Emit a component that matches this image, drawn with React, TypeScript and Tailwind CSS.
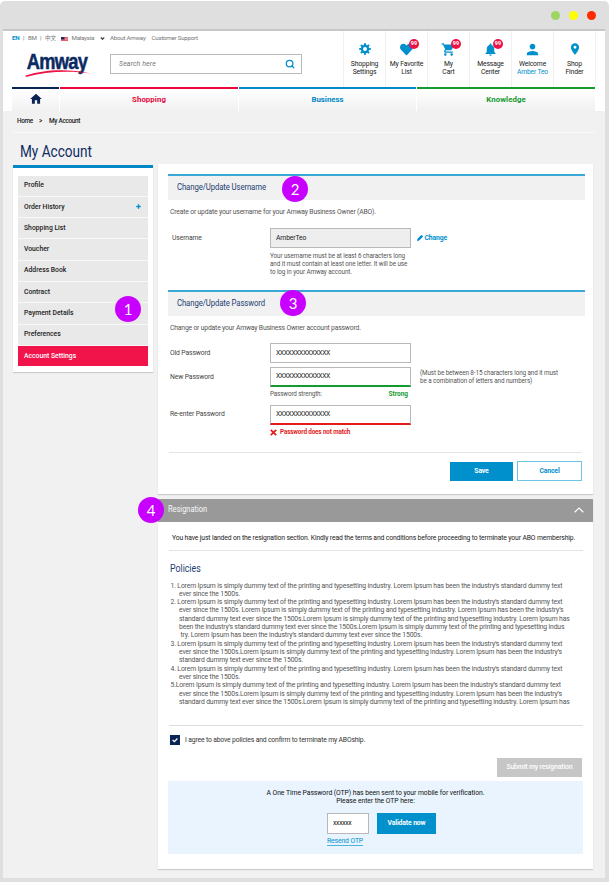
import type { ReactNode } from 'react';
import { FaHeart } from 'react-icons/fa';
import { MdHome, MdLocationOn, MdNotifications, MdPerson, MdShoppingCart } from 'react-icons/md';
import { FiSearch } from 'react-icons/fi';

const menu = [
  'Profile',
  'Order History',
  'Shopping List',
  'Voucher',
  'Address Book',
  'Contract',
  'Payment Details',
  'Preferences',
];

const policies = [
  { indent: false, text: '1. Lorem Ipsum is simply dummy text of the printing and typesetting industry. Lorem Ipsum has been the industry’s standard dummy text' },
  { indent: true, text: 'ever since the 1500s.' },
  { indent: false, text: '2. Lorem Ipsum is simply dummy text of the printing and typesetting industry. Lorem Ipsum has been the industry’s standard dummy text' },
  { indent: true, text: 'ever since the 1500s. Lorem Ipsum is simply dummy text of the printing and typesetting industry. Lorem Ipsum has been the industry’s' },
  { indent: true, text: 'standard dummy text ever since the 1500s.Lorem Ipsum is simply dummy text of the printing and typesetting industry. Lorem Ipsum has' },
  { indent: true, text: 'been the industry’s standard dummy text ever since the 1500s.Lorem Ipsum is simply dummy text of the printing and typesetting indus' },
  { indent: true, text: ' try. Lorem Ipsum has been the industry’s standard dummy text ever since the 1500s.' },
  { indent: false, text: '3. Lorem Ipsum is simply dummy text of the printing and typesetting industry. Lorem Ipsum has been the industry’s standard dummy text' },
  { indent: true, text: 'ever since the 1500s.Lorem Ipsum is simply dummy text of the printing and typesetting industry. Lorem Ipsum has been the industry’s' },
  { indent: true, text: 'standard dummy text ever since the 1500s.' },
  { indent: false, text: '4. Lorem Ipsum is simply dummy text of the printing and typesetting industry. Lorem Ipsum has been the industry’s standard dummy text' },
  { indent: true, text: 'ever since the 1500s.' },
  { indent: false, text: '5.Lorem Ipsum is simply dummy text of the printing and typesetting industry. Lorem Ipsum has been the industry’s standard dummy text' },
  { indent: true, text: 'ever since the 1500s.Lorem Ipsum is simply dummy text of the printing and typesetting industry. Lorem Ipsum has been the industry’s' },
  { indent: true, text: 'standard dummy text ever since the 1500s.Lorem Ipsum is simply dummy text of the printing and typesetting industry. Lorem Ipsum has' },
];

function Marker({ n, className }: { n: number; className: string }) {
  return (
    <span
      className={`absolute flex size-[26px] items-center justify-center rounded-full bg-[#c800ff] font-['Lato',sans-serif] text-[15px] leading-none text-white ${className}`}
    >
      {n}
    </span>
  );
}

function Badge() {
  return (
    <span className="absolute -top-[3px] left-[9.5px] flex size-[10px] items-center justify-center rounded-full bg-[#ee1144] text-[5.5px] font-bold leading-none text-white">
      99
    </span>
  );
}

function Tool({ icon, badge, top, bottom, accent }: { icon: ReactNode; badge?: boolean; top: string; bottom: string; accent?: boolean }) {
  return (
    <div className="flex h-[56px] w-[42px] flex-col items-center border-l border-[#f0f0f0] pt-[11px]">
      <span className="relative flex h-[14px] w-[14px] items-center justify-center text-[#0090cc]">
        {icon}
        {badge && <Badge />}
      </span>
      <span className="mt-[3.5px] whitespace-nowrap text-center text-[6.8px] leading-[8.3px] tracking-[-0.14px] text-[#222]">
        {top}
        <br />
        <span className={accent ? 'tracking-[-0.2px] text-[#0090cc]' : ''}>{bottom}</span>
      </span>
    </div>
  );
}

function SectionTitle({ children }: { children: string }) {
  return (
    <h2 className="h-[26px] border-t-2 border-[#3aa9d6] bg-[#f1f1f1] pl-[9px] text-[9.3px] leading-[21px] text-[#1c3f72]">
      <span className="inline-block origin-left scale-x-[.835]">{children}</span>
    </h2>
  );
}

function Field({ value, className }: { value: string; className: string }) {
  return (
    <div className={`flex h-[20px] w-[141px] items-center border border-[#b8b8b8] pl-[5px] text-[6.8px] text-[#222] ${className}`}>
      {value}
    </div>
  );
}

function Header() {
  return (
    <header className="h-[80px] bg-white pl-[9px] pr-[10px]">
      <div className="flex h-[56px]">
        <div className="flex-1">
          <div className="flex h-[15px] items-center whitespace-nowrap text-[6.2px] tracking-[-0.25px] text-[#777]">
            <span className="w-[11px] font-bold text-[#0090cc]">EN</span>
            <span className="w-[5px]">|</span>
            <span className="w-[12px]">BM</span>
            <span className="w-[5px]">|</span>
            <span className="w-[16px] font-['Noto_Sans_CJK_SC',sans-serif] text-[5.5px] tracking-normal">中文</span>
            <svg className="mr-[3.5px] h-[4px] w-[7px]" viewBox="0 0 14 8">
              <path fill="#f3a0a8" d="M0 0h14v8H0z" />
              <path stroke="#dd3344" strokeWidth="1.2" d="M0 1h14M0 4h14M0 7h14" />
              <path fill="#222855" d="M0 0h7v5H0z" />
            </svg>
            <span className="w-[28px]">Malaysia</span>
            <svg className="mr-[5.5px] h-[3px] w-[5px]" viewBox="0 0 10 6" fill="none" stroke="#444" strokeWidth="2.4">
              <path d="M1.5 1L5 4.5 8.5 1" />
            </svg>
            <span className="w-[41.5px]">About Amway</span>
            <span>Customer Support</span>
          </div>
          <div className="flex">
            <div className="relative ml-[13px] mt-[5px] h-[26px] w-[85px]">
              <span className="block origin-left scale-x-[.85] pl-[2px] font-['Liberation_Sans',sans-serif] text-[21.5px] font-bold leading-[23px] tracking-[-0.8px] text-[#0b2a63] [-webkit-text-stroke:.5px_#0b2a63]">
                Amway
              </span>
              <svg className="absolute left-0 top-[18px] h-[8px] w-[66px]" viewBox="0 0 66 8">
                <path fill="#ee1144" d="M.5 6.6C18 .6 43-.8 65.5 4.6 44 1.2 20 2.8.8 8Z" />
              </svg>
            </div>
            <div className="mt-[8px] flex h-[20px] w-[192px] items-center justify-between border border-[#bbb] pl-[8px] pr-[6px] text-[7px] italic tracking-[.1px] text-[#777]">
              Search here
              <FiSearch className="size-[10px] stroke-[3] text-[#0090cc]" />
            </div>
          </div>
        </div>
        <div className="-mr-px flex border-r border-[#f0f0f0]">
          <Tool
            icon={
              <svg className="size-[12px]" viewBox="0 0 24 24" fill="none" stroke="currentColor">
                <circle cx="12" cy="12" r="6.2" strokeWidth="4.4" />
                <path strokeWidth="4.2" d="M12 .5v4M12 19.5v4M.5 12h4M19.5 12h4M3.9 3.9l2.8 2.8M17.3 17.3l2.8 2.8M20.1 3.9l-2.8 2.8M6.7 17.3l-2.8 2.8" />
              </svg>
            }
            top="Shopping"
            bottom="Settings"
          />
          <Tool icon={<FaHeart className="size-[13px]" />} badge top="My Favorite" bottom="List" />
          <Tool icon={<MdShoppingCart className="size-[15px] shrink-0" />} badge top="My" bottom="Cart" />
          <Tool icon={<MdNotifications className="size-[15px] shrink-0" />} badge top="Message" bottom="Center" />
          <Tool icon={<MdPerson className="size-[17px] shrink-0" />} top="Welcome" bottom="Amber Teo" accent />
          <Tool icon={<MdLocationOn className="size-[14px]" />} top="Shop" bottom="Finder" />
        </div>
      </div>
      <nav className="flex h-[24px] gap-px text-center text-[7.8px] font-bold leading-[21px]">
        <a className="flex w-[47px] justify-center border-t-2 border-[#0b2456] bg-linear-to-b from-white to-[#f1f1f1] pt-[3px]">
          <MdHome className="size-[14px] text-[#0b2456]" />
        </a>
        <a className="w-[178px] border-t-2 border-[#e8073c] bg-linear-to-b from-white to-[#f1f1f1] tracking-[.08px] text-[#e8073c]">Shopping</a>
        <a className="w-[177px] border-t-2 border-[#0088c7] bg-linear-to-b from-white to-[#f1f1f1] text-[#0088c7]">Business</a>
        <a className="flex-1 border-t-2 border-[#159a2f] bg-linear-to-b from-white to-[#f1f1f1] tracking-[.08px] text-[#159a2f]">Knowledge</a>
      </nav>
    </header>
  );
}

function Sidebar() {
  return (
    <aside className="w-[140px]">
      <h1 className="h-[31px] pl-[7px] text-[17px] leading-[37px] text-[#0f2d63]">
        <span className="inline-block origin-left scale-x-[.8]">My Account</span>
      </h1>
      <div className="mt-px h-[207px] border-t-[3px] border-[#0088c7] bg-white px-[5px] pt-[7.5px] text-[6.8px] font-medium text-[#222] shadow-[0_1px_1px_#ccc]">
        {menu.map((item) => (
          <div key={item} className="flex h-[21.3px] items-center justify-between border-b border-[#f8f8f8] bg-[#e9e9e9] pb-[0.5px] pl-[6px] pr-[7px]">
            {item}
            {item === 'Order History' && (
              <svg className="size-[5px]" viewBox="0 0 5 5" stroke="#0090cc" strokeWidth="1.3">
                <path d="M2.5 .3v4.4M.3 2.5h4.4" />
              </svg>
            )}
          </div>
        ))}
        <div className="flex h-[20.6px] items-center bg-[#f0144b] pb-[1px] pl-[6px] text-white">Account Settings</div>
      </div>
    </aside>
  );
}

function AccountCard() {
  return (
    <section className="h-[330px] bg-white px-[10px] pt-[10px] text-[6.8px] tracking-[-0.13px] text-[#555] shadow-[0_1px_1px_#ccc]">
      <div className="w-[417px]">
        <SectionTitle>Change/Update Username</SectionTitle>
        <p className="h-[28px] pl-[2px] pt-[8px] leading-[9px] tracking-[-0.18px]">Create or update your username for your Amway Business Owner (ABO).</p>
        <div className="flex h-[20px] items-center">
          <span className="w-[102px] pl-[4px] text-[#444]">Username</span>
          <Field value="AmberTeo" className="bg-[#eee]" />
          <svg className="ml-[6px] size-[6px]" viewBox="0 0 6 6" fill="#0090cc">
            <path d="M0 6l.5-2.2L4 .3q.5-.5 1 0l.7.7q.5.5 0 1L2.200 5.500Z" />
          </svg>
          <span className="ml-[1.5px] font-bold text-[#0090cc]">Change</span>
        </div>
        <p className="ml-[102px] mt-[3.5px] h-[38.5px] whitespace-nowrap text-[6.3px] leading-[8px] tracking-[-0.08px]">
          Your username must be at least 6 characters long
          <br />
          and it must contain at least one letter. It will be use
          <br />
          to log in your Amway account.
        </p>
        <SectionTitle>Change/Update Password</SectionTitle>
        <p className="h-[27px] pl-[2px] pt-[8px] leading-[9px] tracking-[-0.185px]">Change or update your Amway Business Owner account password.</p>
        <div className="flex h-[20px] items-center">
          <span className="w-[102px] pl-[2px] text-[#444]">Old Password</span>
          <Field value="XXXXXXXXXXXXXX" className="tracking-[-0.41px]" />
        </div>
        <div className="mt-[4px] flex h-[20px] items-center">
          <span className="w-[102px] pl-[2px] text-[#444]">New Password</span>
          <Field value="XXXXXXXXXXXXXX" className="border-b-2 border-b-[#159a2f] tracking-[-0.41px]" />
          <span className="ml-[9px] whitespace-nowrap text-[6.3px] leading-[8px] tracking-[-0.085px]">
            (Must be between 8-15 characters long and it must
            <br />
            be a combination of letters and numbers)
          </span>
        </div>
        <div className="ml-[102px] flex h-[17px] w-[138px] justify-between pt-[2.5px] text-[6.3px] leading-[9px]">
          <span>Password strength:</span>
          <span className="text-[6.5px] font-bold tracking-normal text-[#159a2f]">Strong</span>
        </div>
        <div className="flex h-[21px] items-center">
          <span className="w-[102px] pl-[2px] text-[#444]">Re-enter Password</span>
          <Field value="XXXXXXXXXXXXXX" className="border-b-2 border-b-[#e51b1b] tracking-[-0.41px]" />
        </div>
        <div className="ml-[102px] mt-[2px] flex h-[25px] items-start text-[6.3px] font-bold leading-[10px] text-[#e51b1b]">
          <svg className="mt-[2px] size-[7px]" viewBox="0 0 7 7" stroke="#e51b1b" strokeWidth="1.7">
            <path d="M.8 .8l5.4 5.4M6.2 .8L.8 6.2" />
          </svg>
          <span className="ml-[3px]">Password does not match</span>
        </div>
      </div>
      <div className="ml-px flex h-[29px] w-[413px] items-end justify-end gap-[4px] border-t border-[#e4e4e4] font-bold">
        <button className="h-[19px] w-[63px] bg-[#0090cc] text-white">Save</button>
        <button className="h-[20px] w-[65px] border border-[#6cc3e4] text-[#0090cc]">Cancel</button>
      </div>
    </section>
  );
}

function ResignationCard() {
  return (
    <section className="mt-[5px] h-[370px] bg-white text-[6.8px] tracking-[-0.14px] text-[#555] shadow-[0_1px_1px_#ccc]">
      <div className="flex h-[23px] items-center justify-between bg-[#999] pb-[1px] pl-[10px] pr-[9px] text-[8.8px] tracking-normal text-[#f8f8f8]">
        <span className="inline-block origin-left scale-x-[.845]">Resignation</span>
        <svg className="h-[6px] w-[10px]" viewBox="0 0 10 6" fill="none" stroke="#fff" strokeWidth="1.2">
          <path d="M.7 5.2L5 1l4.3 4.2" />
        </svg>
      </div>
      <p className="ml-[11px] h-[29px] w-[414px] whitespace-nowrap border-b border-[#e4e4e4] pl-[3px] leading-[33px] text-[#222]">
        You have just landed on the resignation section. Kindly read the terms and conditions before proceeding to terminate your ABO membership.
      </p>
      <h2 className="h-[29px] pl-[12px] text-[10.4px] leading-[35px] tracking-normal text-[#1c3f72]">
        <span className="inline-block origin-left scale-x-[.845]">Policies</span>
      </h2>
      <div className="ml-[11px] h-[146px] w-[414px] whitespace-pre border-b border-[#ddd] pl-[1.5px] pt-[1.5px] leading-[8.33px] tracking-[-0.145px]">
        {policies.map((line, i) => (
          <div key={i} className={line.indent ? 'pl-[8.5px]' : ''}>
            {line.text}
          </div>
        ))}
      </div>
      <div className="flex h-[28px] items-center pl-[12px] tracking-[-0.16px] text-[#333]">
        <svg className="mr-[5px] size-[10px]" viewBox="0 0 10 10" fill="none">
          <path fill="#0b2456" d="M0 0h10v10H0z" />
          <path stroke="#fff" strokeWidth="1.3" d="M2.6 5l1.8 1.7 3-3.2" />
        </svg>
        I agree to above policies and confirm to terminate my ABOship.
      </div>
      <button className="ml-[339px] mt-[4px] block h-[19px] w-[85px] bg-[#c6c6c6] font-medium tracking-[-0.11px] text-white">Submit my resignation</button>
      <div className="ml-[10px] mt-[4px] h-[73px] w-[415px] bg-[#e9f4fe] pt-[8px] text-[#111]">
        <p className="text-center leading-[8.3px] tracking-[-0.055px]">
          A One Time Password (OTP) has been sent to your mobile for verification.
          <br />
          Please enter the OTP here:
        </p>
        <div className="ml-[159px] mt-[7px] flex h-[21px] gap-[8px]">
          <div className="flex w-[42px] items-center border border-[#b8b8b8] bg-white pl-[5px] tracking-[-0.3px]">xxxxxx</div>
          <button className="w-[59px] bg-[#0090cc] font-bold tracking-[-0.11px] text-white">Validate now</button>
        </div>
        <a className="ml-[159px] mt-[3px] block w-fit border-b border-[#4bb3da] leading-[8px] tracking-[-0.11px] text-[#0090cc]">Resend OTP</a>
      </div>
    </section>
  );
}

export default function App() {
  return (
    <div className="h-[882px] w-[610px] bg-white pt-px font-['Roboto','Liberation_Sans',sans-serif]">
      <div className="relative h-[881px] w-[609px] rounded-t-[5px] bg-[#dfdfdf] pl-[3px] pr-[4px]">
        <div className="flex h-[30px] items-center justify-end gap-[9px] border-b-2 border-[#c6c6c6] pr-[9px]">
          <span className="size-[9px] rounded-full bg-[#9fd561]" />
          <span className="size-[9px] rounded-full bg-[#ffff00]" />
          <span className="size-[9px] rounded-full bg-[#ff2a00]" />
        </div>
        <Header />
        <main className="h-[767px] bg-[#f1f1f1] px-[10px]">
          <div className="flex h-[22px] items-center border-b border-[#fafafa] pl-[4px] text-[6.4px] font-medium tracking-[-0.29px] text-[#222]">
            <span className="w-[22px]">Home</span>
            <span className="w-[10px]">&gt;</span>
            <span>My Account</span>
          </div>
          <div className="flex gap-[5px]">
            <Sidebar />
            <div className="w-[435px] pt-[31px]">
              <AccountCard />
              <ResignationCard />
            </div>
          </div>
        </main>
        <Marker n={1} className="left-[115px] top-[295px]" />
        <Marker n={2} className="left-[282px] top-[175px]" />
        <Marker n={3} className="left-[280px] top-[289px]" />
        <Marker n={4} className="left-[138px] top-[496px]" />
      </div>
    </div>
  );
}
